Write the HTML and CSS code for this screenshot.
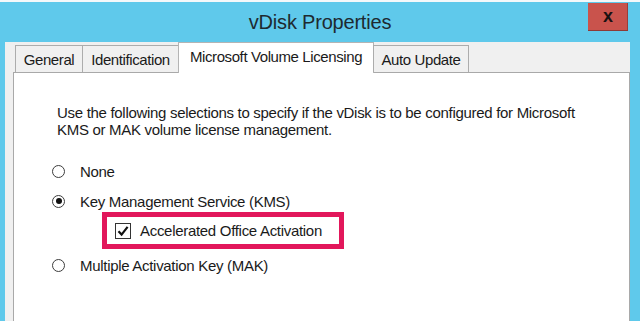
FILE: index.html
```html
<!DOCTYPE html>
<html>
<head>
<meta charset="utf-8">
<link rel="stylesheet" href="styles.css">
</head>
<body>
<div class="window">
  <div class="topline"></div>
  <div class="titlebar">
    <span class="title">vDisk Properties</span>
    <span class="close">x</span>
  </div>
  <div class="dialog">
    <div class="tabs">
      <div class="tab tab-general">General</div>
      <div class="tab tab-ident">Identification</div>
      <div class="tab tab-mvl active">Microsoft Volume Licensing</div>
      <div class="tab tab-auto">Auto Update</div>
    </div>
    <div class="pane">
      <p class="intro">Use the following selections to specify if the vDisk is to be configured for Microsoft<br>KMS or MAK volume license management.</p>
      <div class="options">
        <div class="option opt-none"><span class="radio"></span><span>None</span></div>
        <div class="option opt-kms"><span class="radio checked"></span><span>Key Management Service (KMS)</span></div>
        <div class="highlight"><span class="checkbox"><svg width="14" height="14" viewBox="0 0 14 14"><path d="M2.5 7.2 L5.6 10.6 L11.6 2.8" fill="none" stroke="#111" stroke-width="2.2"/></svg></span><span>Accelerated Office Activation</span></div>
        <div class="option opt-mak"><span class="radio"></span><span>Multiple Activation Key (MAK)</span></div>
      </div>
    </div>
  </div>
</div>
</body>
</html>
```
FILE: styles.css
```css
html, body {
  margin: 0;
  padding: 0;
}
body {
  width: 640px;
  height: 321px;
  overflow: hidden;
  background: #5fc9eb;
  font-family: "Liberation Sans", Arial, sans-serif;
  color: #1a1a1a;
}
.window {
  display: flex;
  flex-direction: column;
  height: 321px;
}
.topline {
  height: 2px;
  background: #f4f8fa;
}
.titlebar {
  height: 40px;
  display: grid;
  grid-template-columns: 1fr auto 1fr;
  align-items: center;
}
.title {
  grid-column: 2;
  font-size: 20px;
  color: #1e2a30;
  letter-spacing: -0.2px;
  padding-top: 1px;
}
.close {
  grid-column: 3;
  justify-self: end;
  align-self: start;
  margin-top: 1px;
  margin-right: 12px;
  width: 40px;
  height: 28px;
  background: #c9534c;
  box-shadow: inset 0 -1px 0 #8e3a36, inset -1px 0 0 #9a3e3a;
  display: flex;
  align-items: center;
  justify-content: center;
  font-weight: bold;
  font-size: 18px;
  color: #1a1212;
  line-height: 1;
  padding-bottom: 3px;
  box-sizing: border-box;
}
.dialog {
  flex: 1;
  margin-left: 5px;
  width: 625px;
  background: #f0f0f0;
  display: flex;
  flex-direction: column;
  padding-left: 8px;
  box-sizing: border-box;
}
.tabs {
  display: flex;
  align-items: flex-end;
  height: 30px;
  padding-left: 3px;
  position: relative;
  z-index: 1;
}
.tab {
  height: 27px;
  box-sizing: border-box;
  border: 1px solid #acacac;
  border-bottom: none;
  background: #f0f0f0;
  font-size: 15px;
  letter-spacing: -0.4px;
  display: flex;
  align-items: center;
  justify-content: center;
  padding-top: 1px;
  margin-left: -1px;
  white-space: nowrap;
}
.tab-general { width: 68px; }
.tab-ident { width: 97px; }
.tab-mvl { width: 196px; }
.tab-auto { width: 96px; }
.tab.active {
  height: 31px;
  margin-bottom: -1px;
  background: #fff;
  padding: 0 0 4px 0;
  border-color: #b4b4b4;
}
.pane {
  flex: 1;
  background: #fff;
  border: 1px solid #a9a9a9;
  border-bottom: none;
  padding-left: 38px;
}
.intro {
  margin: 31px 0 0 5px;
  font-size: 15px;
  line-height: 17px;
  letter-spacing: -0.3px;
}
.options {
  display: flex;
  flex-direction: column;
  align-items: flex-start;
  font-size: 15px;
  letter-spacing: -0.3px;
}
.option {
  display: flex;
  align-items: center;
  height: 20px;
}
.opt-none {
  margin-top: 23px;
}
.opt-kms {
  margin-top: 10px;
}
.opt-mak {
  margin-top: 6px;
}
.radio {
  width: 13px;
  height: 13px;
  box-sizing: border-box;
  border: 1px solid #3c3c3c;
  border-radius: 50%;
  background: #fff;
  margin-right: 15px;
  display: flex;
  align-items: center;
  justify-content: center;
}
.radio.checked::after {
  content: "";
  width: 6px;
  height: 6px;
  border-radius: 50%;
  background: #111;
}
.highlight {
  margin-top: 1px;
  margin-left: 50px;
  height: 37px;
  box-sizing: border-box;
  border: 5px solid #e2175b;
  display: flex;
  align-items: center;
  padding: 0 17px 0 8px;
}
.checkbox {
  width: 16px;
  height: 16px;
  box-sizing: border-box;
  border: 1px solid #333;
  background: #fff;
  margin-right: 9px;
  display: flex;
  align-items: center;
  justify-content: center;
}
```
